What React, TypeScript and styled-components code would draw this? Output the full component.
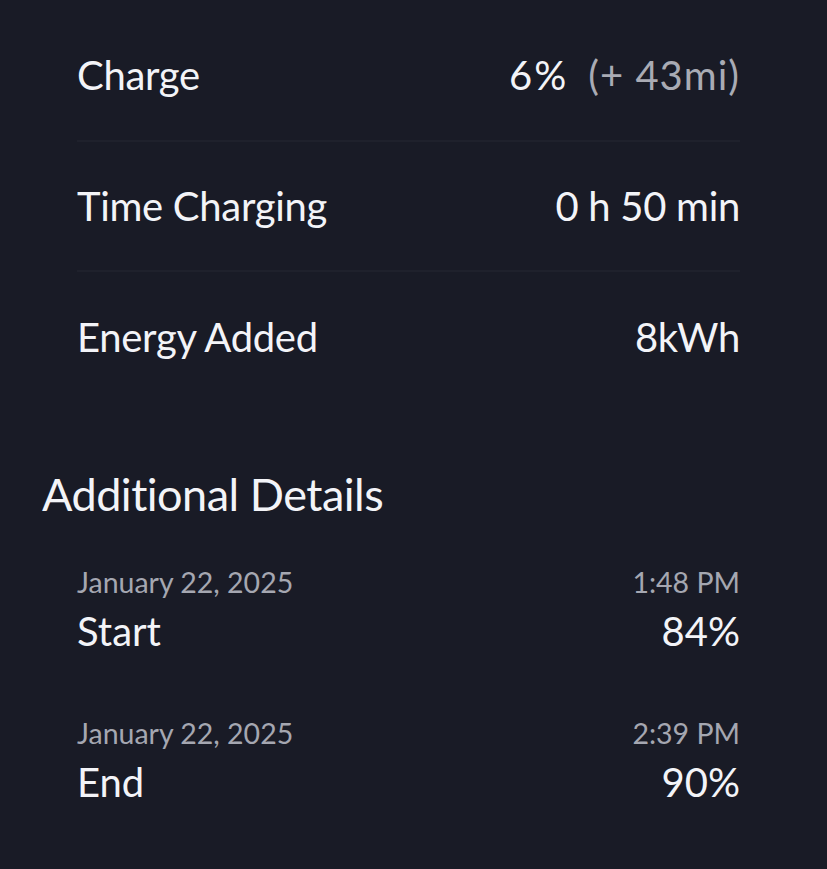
import React from "react";
import styled, { createGlobalStyle } from "styled-components";

const Global = createGlobalStyle`
  html, body { margin: 0; padding: 0; background: #191b26; }
  body { font-family: Lato, "Open Sans", sans-serif; -webkit-font-smoothing: antialiased; }
`;

const Page = styled.div`
  width: 827px;
  min-height: 869px;
  background: #191b26;
  color: #f3f4f8;
  box-sizing: border-box;
  padding: 0 87px 0 42px;
`;

const Summary = styled.section`
  padding-left: 35px;
  display: flex;
  flex-direction: column;
`;

const Row = styled.div<{ $divider?: boolean }>`
  display: flex;
  justify-content: space-between;
  align-items: center;
  height: 130px;
  border-bottom: ${(p) => (p.$divider ? "2px solid #1f212c" : "none")};
  box-sizing: border-box;
  &:first-child { height: 142px; padding-top: 10px; }
`;

const Label = styled.span`
  font-size: 40px;
  font-weight: 400;
  letter-spacing: -0.3px;
`;

const Value = styled.span`
  font-size: 40px;
  font-weight: 400;
  letter-spacing: -0.3px;
`;

const Percent = styled.span`
  letter-spacing: 2px;
`;

const Muted = styled.span`
  color: #a9abb4;
  margin-left: 20px;
  letter-spacing: 1px;
`;

const Heading = styled.h2`
  margin: 64px 0 0;
  font-size: 45px;
  font-weight: 400;
  letter-spacing: -0.5px;
  line-height: 56px;
`;

const Details = styled.section`
  padding-left: 35px;
  margin-top: 43px;
  display: flex;
  flex-direction: column;
  gap: 53px;
`;

const Event = styled.div`
  display: flex;
  flex-direction: column;
`;

const Line = styled.div`
  display: flex;
  justify-content: space-between;
  align-items: baseline;
`;

const Meta = styled.span`
  font-size: 28.5px;
  color: #a5a7b1;
  line-height: 34px;
`;

const Big = styled.span`
  font-size: 40px;
  line-height: 64px;
`;

export default function App() {
  return (
    <Page>
      <Global />
      <Summary>
        <Row $divider>
          <Label>Charge</Label>
          <Value>
            <Percent>6%</Percent>
            <Muted>(+ 43mi)</Muted>
          </Value>
        </Row>
        <Row $divider>
          <Label>Time Charging</Label>
          <Value>0 h 50 min</Value>
        </Row>
        <Row>
          <Label>Energy Added</Label>
          <Value>8kWh</Value>
        </Row>
      </Summary>
      <Heading>Additional Details</Heading>
      <Details>
        <Event>
          <Line>
            <Meta>January 22, 2025</Meta>
            <Meta>1:48 PM</Meta>
          </Line>
          <Line>
            <Big>Start</Big>
            <Big>84%</Big>
          </Line>
        </Event>
        <Event>
          <Line>
            <Meta>January 22, 2025</Meta>
            <Meta>2:39 PM</Meta>
          </Line>
          <Line>
            <Big>End</Big>
            <Big>90%</Big>
          </Line>
        </Event>
      </Details>
    </Page>
  );
}
